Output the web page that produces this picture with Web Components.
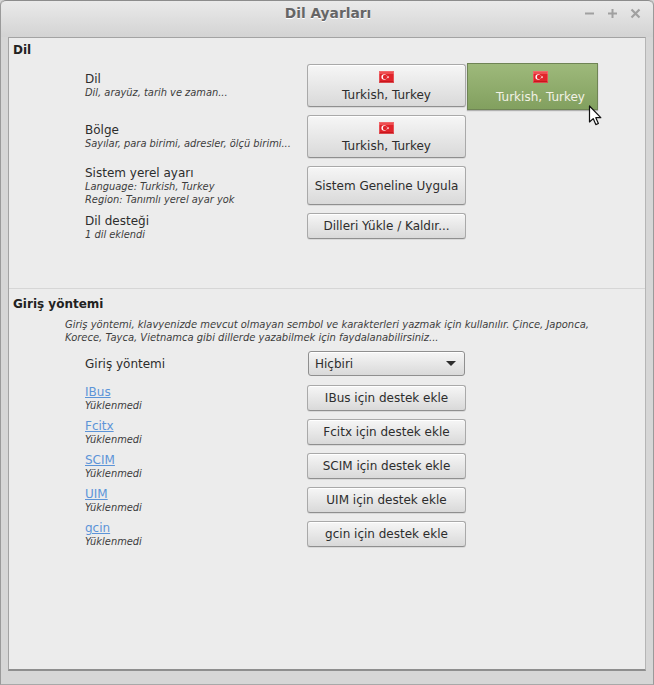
<!DOCTYPE html>
<html><head><meta charset="utf-8">
<style>
html,body{margin:0;padding:0;background:#d6d6d6}
body{width:654px;height:685px;overflow:hidden;font-family:"DejaVu Sans",sans-serif;color:#2d2d2d}
</style></head><body>
<template id="t-flag"><style>:host{display:block;width:15px;height:12px;margin-left:-1px}svg{display:block}</style>
<svg width="15" height="12" viewBox="0 0 15 12"><rect x="0" y="0" width="15" height="12" fill="#e0242b"/><rect x="0" y="0" width="15" height="3" fill="#ee4d50"/><rect x="0" y="10" width="15" height="2" fill="#c9161d"/><rect x=".5" y=".5" width="14" height="11" fill="none" stroke="#f2888a" stroke-opacity=".45"/><circle cx="5.2" cy="6" r="2.8" fill="#fff"/><circle cx="6" cy="6" r="2.2" fill="#e0242b"/><path d="M8.8 4.6l.4 1 1-.1-.7.8.5.9-1-.4-.6.7.1-1-.9-.4 1-.3z" fill="#fff"/></svg></template>

<template id="t-btn"><style>
:host{display:flex;box-sizing:border-box;width:159px;flex-direction:column;align-items:center;justify-content:center;gap:5px;border:1px solid #a9a9a9;border-bottom-color:#8f8f8f;border-radius:3px;background:linear-gradient(#f6f6f6,#d9d9d9);box-shadow:inset 0 1px 0 #fff,0 1px 0 rgba(0,0,0,.08);font-size:12px;color:#2d2d2d;white-space:nowrap}
:host([h="43"]){height:43px;padding-top:2px}
:host([h="39"]){height:39px}
:host([h="26"]){height:26px}
</style><slot></slot></template>

<template id="t-hover"><style>
:host{display:flex;box-sizing:border-box;width:131px;height:47px;margin-top:-1px;flex-direction:column;align-items:center;justify-content:flex-start;gap:7px;padding:7px 0 0 16px;border:1px solid #6f8455;background:linear-gradient(#9eb97b,#82a05f);box-shadow:0 1px 1px rgba(0,0,0,.25);font-size:12px;color:#f2f2e6;white-space:nowrap}
</style><slot></slot></template>

<template id="t-row"><style>
:host{display:flex;align-items:stretch;padding-left:76px}
.l{width:222px;flex:none;display:flex;flex-direction:column;justify-content:var(--j,center)}
.c{display:flex;align-items:flex-start;gap:1px}
</style><div class="l"><slot name="label"></slot></div><div class="c"><slot></slot></div></template>

<template id="t-label"><style>
:host{display:block;font-size:12px;line-height:15px;padding-top:1px;margin-bottom:-1px;color:#2d2d2d;white-space:nowrap}
</style><slot></slot></template>

<template id="t-sub"><style>
:host{display:block;font-size:9.87px;font-style:italic;line-height:13px;color:#3c3c3c;white-space:nowrap}
</style><slot></slot></template>

<template id="t-link"><style>
:host{display:block;font-size:12px;line-height:15px;padding-top:1px;margin-bottom:-1px;color:#5c94d8;text-decoration:underline;white-space:nowrap}
</style><slot></slot></template>

<template id="t-combo"><style>
:host{display:flex;box-sizing:border-box;width:157px;height:25px;margin-left:1px;align-items:center;justify-content:space-between;padding:0 8px 0 6px;border:1px solid #8f8f8f;border-radius:3px;background:linear-gradient(#f6f6f6,#d9d9d9);box-shadow:inset 0 1px 0 #fff;font-size:12px;color:#2d2d2d}
i{display:block;width:0;height:0;border-left:5px solid transparent;border-right:5px solid transparent;border-top:5px solid #2d2d2d}
</style><slot></slot><i></i></template>

<template id="t-title"><style>
:host{display:grid;grid-template-columns:1fr auto 1fr;align-items:center;box-sizing:border-box;height:37px;padding:0 0 12px 2px;background:linear-gradient(#eaeaea,#d3d3d3);border-top:1px solid #8c8c8c;border-radius:5px 5px 0 0;font-size:13.8px;font-weight:bold;color:#666;text-shadow:0 1px 0 #fff}
.b{grid-column:3;justify-self:end;display:flex;gap:12px;align-items:center;padding-right:12px}
.t{grid-column:2}
svg{display:block}
</style><span class="t"><slot></slot></span>
<div class="b">
<svg width="11" height="11" viewBox="0 0 11 11"><path d="M1 5.5h9" stroke="#a0a0a0" stroke-width="2"/></svg>
<svg width="11" height="11" viewBox="0 0 11 11"><path d="M1 5.5h9M5.5 1v9" stroke="#a0a0a0" stroke-width="2"/></svg>
<svg width="11" height="11" viewBox="0 0 11 11"><path d="M1.5 1.5l8 8M9.5 1.5l-8 8" stroke="#a0a0a0" stroke-width="2.2"/></svg>
</div></template>

<template id="t-win"><style>
:host{display:block;position:relative;width:654px;height:685px;box-sizing:border-box;border:1px solid #9a9a9a;border-top:0;border-bottom-color:#a8a8a8;background:#d6d6d6;border-radius:5px 5px 0 0;overflow:hidden}
.body{box-sizing:border-box;width:638px;height:634px;margin-left:7px;background:#ececec;border:1px solid #a3a3a3;border-bottom:2px solid #8e8e8e;border-right-color:#b5b5b5}
.cur{position:absolute;left:587px;top:105px}
</style><slot name="title"></slot><div class="body"><slot></slot></div>
<svg class="cur" width="15" height="22" viewBox="0 0 15 22"><path d="M1.5 1v16l3.7-3.4 2.6 6 2.6-1.1-2.6-5.8h5z" fill="#fff" stroke="#111" stroke-width="1.2" stroke-linejoin="round"/></svg></template>

<template id="t-sec"><style>
:host{display:block;box-sizing:border-box}
h2{margin:0;padding-left:4px;font-size:12px;line-height:15px;font-weight:bold;color:#222}
.rows{display:flex;flex-direction:column;gap:var(--gap,8px)}
</style><h2><slot name="head"></slot></h2><slot name="desc"></slot><div class="rows" style="margin-top:var(--mt,14px)"><slot></slot></div></template>

<template id="t-desc"><style>
:host{display:block;margin:6px 0 0 56px;font-size:9.96px;font-style:italic;line-height:13px;color:#3c3c3c;width:560px}
</style><slot></slot></template>

<dil-window>
<dil-title slot="title">Dil Ayarları</dil-title>
<dil-section id="s1" style="padding-top:5px;height:251px;border-bottom:1px solid #d6d6d6;--mt:6px">
  <span slot="head">Dil</span>
  <dil-row style="height:43px;--j:flex-start">
    <div slot="label" style="padding-top:7px"><dil-label>Dil</dil-label><dil-sub>Dil, arayüz, tarih ve zaman...</dil-sub></div>
    <dil-btn h="43"><dil-flag></dil-flag><span>Turkish, Turkey</span></dil-btn>
    <dil-hover><dil-flag></dil-flag><span>Turkish, Turkey</span></dil-hover>
  </dil-row>
  <dil-row style="height:43px;--j:flex-start">
    <div slot="label" style="padding-top:7px"><dil-label>Bölge</dil-label><dil-sub>Sayılar, para birimi, adresler, ölçü birimi...</dil-sub></div>
    <dil-btn h="43"><dil-flag></dil-flag><span>Turkish, Turkey</span></dil-btn>
  </dil-row>
  <dil-row style="height:39px">
    <div slot="label"><dil-label>Sistem yerel ayarı</dil-label><dil-sub>Language: Turkish, Turkey</dil-sub><dil-sub>Region: Tanımlı yerel ayar yok</dil-sub></div>
    <dil-btn h="39">Sistem Geneline Uygula</dil-btn>
  </dil-row>
  <dil-row style="height:26px">
    <div slot="label" style="padding-top:1px"><dil-label>Dil desteği</dil-label><dil-sub>1 dil eklendi</dil-sub></div>
    <dil-btn h="26">Dilleri Yükle / Kaldır...</dil-btn>
  </dil-row>
</dil-section>
<dil-section id="s2" style="padding-top:8px;--mt:7px">
  <span slot="head">Giriş yöntemi</span>
  <dil-desc slot="desc">Giriş yöntemi, klavyenizde mevcut olmayan sembol ve karakterleri yazmak için kullanılır. Çince, Japonca, Korece, Tayca, Vietnamca gibi dillerde yazabilmek için faydalanabilirsiniz...</dil-desc>
  <dil-row style="height:25px;margin-bottom:1px"><dil-label slot="label">Giriş yöntemi</dil-label><dil-combo>Hiçbiri</dil-combo></dil-row>
  <dil-row style="height:26px"><div slot="label"><dil-link>IBus</dil-link><dil-sub>Yüklenmedi</dil-sub></div><dil-btn h="26">IBus için destek ekle</dil-btn></dil-row>
  <dil-row style="height:26px"><div slot="label"><dil-link>Fcitx</dil-link><dil-sub>Yüklenmedi</dil-sub></div><dil-btn h="26">Fcitx için destek ekle</dil-btn></dil-row>
  <dil-row style="height:26px"><div slot="label"><dil-link>SCIM</dil-link><dil-sub>Yüklenmedi</dil-sub></div><dil-btn h="26">SCIM için destek ekle</dil-btn></dil-row>
  <dil-row style="height:26px"><div slot="label"><dil-link>UIM</dil-link><dil-sub>Yüklenmedi</dil-sub></div><dil-btn h="26">UIM için destek ekle</dil-btn></dil-row>
  <dil-row style="height:26px"><div slot="label"><dil-link>gcin</dil-link><dil-sub>Yüklenmedi</dil-sub></div><dil-btn h="26">gcin için destek ekle</dil-btn></dil-row>
</dil-section>
</dil-window>
<script>
const map={'dil-flag':'t-flag','dil-btn':'t-btn','dil-hover':'t-hover','dil-row':'t-row','dil-label':'t-label','dil-sub':'t-sub','dil-link':'t-link','dil-combo':'t-combo','dil-title':'t-title','dil-window':'t-win','dil-section':'t-sec','dil-desc':'t-desc'};
for(const [name,id] of Object.entries(map)){
  customElements.define(name,class extends HTMLElement{
    constructor(){super();this.attachShadow({mode:'open'}).appendChild(document.getElementById(id).content.cloneNode(true));}
  });
}
</script>
</body></html>
